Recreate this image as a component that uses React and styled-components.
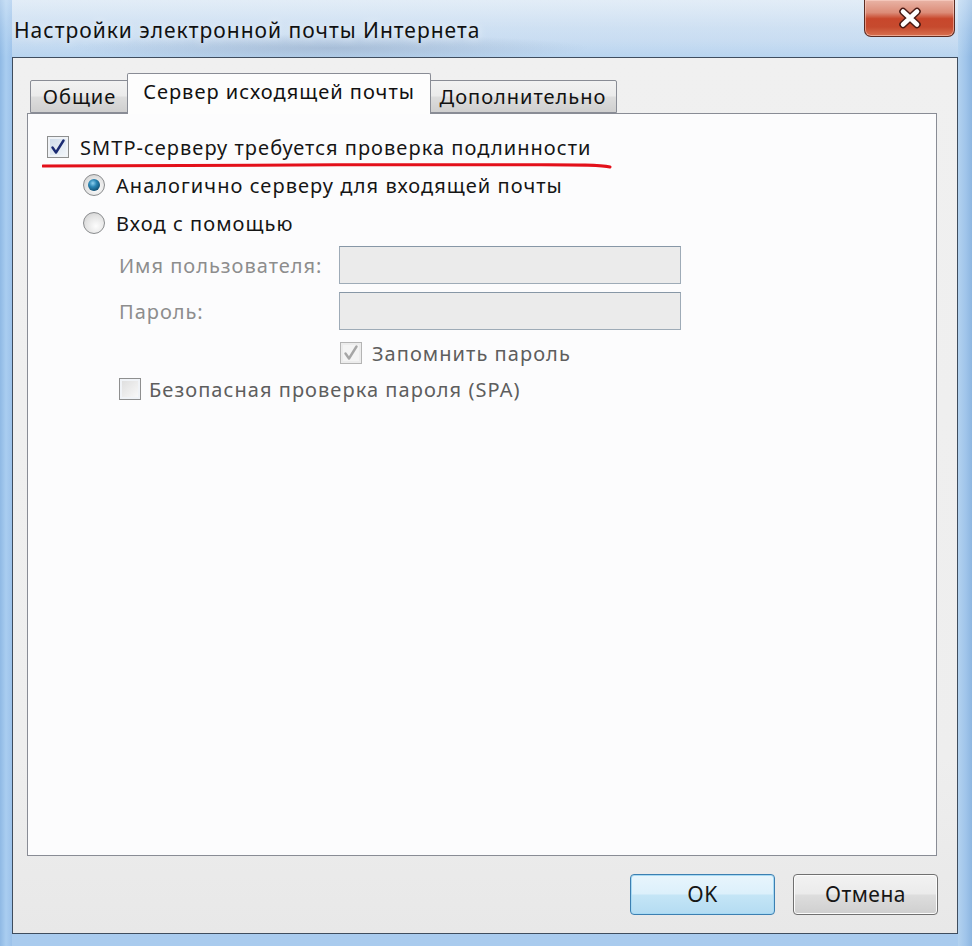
import React from 'react';
import styled, { createGlobalStyle } from 'styled-components';

const GlobalStyle = createGlobalStyle`
	html, body {
		margin: 0;
		padding: 0;
		background: #ffffff;
	}
	body {
		font-family: "Noto Sans", "Open Sans", sans-serif;
	}
`

function CheckMark({ color }) {
	return (
		<svg width="16" height="16" viewBox="0 0 16 16">
			<path d="M2.5 8.5 L6 13.5 L13.5 1.5" fill="none" stroke={color} strokeWidth="2.4" strokeLinecap="round" strokeLinejoin="round" />
		</svg>
	)
}

function CloseGlyph() {
	return (
		<svg width="30" height="22" viewBox="0 0 30 22">
			<path d="M8 4.5 L22 17.5 M22 4.5 L8 17.5" stroke="#4a1a14" strokeWidth="7.5" strokeLinecap="round" />
			<path d="M8 4.5 L22 17.5 M22 4.5 L8 17.5" stroke="#ffffff" strokeWidth="4.5" strokeLinecap="round" />
		</svg>
	)
}

function RedUnderline() {
	return (
		<Underline width="570" height="8" viewBox="0 0 570 8">
			<path d="M1 5 C 120 4.5, 300 3.5, 450 3.8 C 520 4, 555 3, 568 6" fill="none" stroke="#e3101a" strokeWidth="3" strokeLinecap="round" />
		</Underline>
	)
}

function App() {
	return (
		<Window>
			<GlobalStyle />
			<TitleBar>
				<Title>Настройки электронной почты Интернета</Title>
				<CloseButton><CloseGlyph /></CloseButton>
			</TitleBar>
			<Client>
				<TabRow>
					<Tab width={99}>Общие</Tab>
					<Tab width={304} active>Сервер исходящей почты</Tab>
					<Tab width={188}>Дополнительно</Tab>
				</TabRow>
				<Panel>
					<Row top={0} indent={0}>
						<Box checked>
							<CheckMark color="#1a2a72" />
						</Box>
						<Label gap={11}>SMTP-серверу требуется проверка подлинности</Label>
						<RedUnderline />
					</Row>
					<Row top={14} indent={36}>
						<Radio selected />
						<Label gap={11}>Аналогично серверу для входящей почты</Label>
					</Row>
					<Row top={14} indent={36}>
						<Radio />
						<Label gap={11}>Вход с помощью</Label>
					</Row>
					<FieldRow top={11}>
						<FieldLabel>Имя пользователя:</FieldLabel>
						<Field disabled />
					</FieldRow>
					<FieldRow top={8}>
						<FieldLabel>Пароль:</FieldLabel>
						<Field disabled type="password" />
					</FieldRow>
					<Row top={11} indent={293}>
						<Box disabled>
							<CheckMark color="#a6a6a6" />
						</Box>
						<Label gap={10} muted>Запомнить пароль</Label>
					</Row>
					<Row top={12} indent={72}>
						<Box />
						<Label gap={8} muted>Безопасная проверка пароля (SPA)</Label>
					</Row>
				</Panel>
				<Footer>
					<Button primary>OK</Button>
					<Button>Отмена</Button>
				</Footer>
			</Client>
		</Window>
	);
}

const Window = styled.div`
	width: 972px;
	height: 946px;
	display: flex;
	flex-direction: column;
	box-sizing: border-box;
	overflow: hidden;
	background:
		linear-gradient(90deg, #8fb9e4 0px, #a9cdf0 6px, #9cc2ea 12px, transparent 12px, transparent 958px, #b3d2ef 958px, #9fc4ea 966px, #8db6e0 972px),
		linear-gradient(180deg, #d3e3f3 0px, #c6dbf1 40px, #b6d3ef 60px, #a9cbee 100%);
`

const TitleBar = styled.div`
	height: 57px;
	flex: none;
	display: flex;
	align-items: flex-start;
	justify-content: space-between;
	padding: 0 17px 0 14px;
	background:
		radial-gradient(ellipse 260px 14px at 330px 48px, rgba(120,140,170,0.35), rgba(120,140,170,0)),
		linear-gradient(180deg, rgba(255,255,255,0.35) 0%, rgba(225,236,247,0.2) 50%, rgba(190,213,238,0) 100%);
`

const Title = styled.div`
	margin-top: 16px;
	font-size: 21px;
	color: #111111;
	letter-spacing: 1px;
	text-shadow: 0 0 10px rgba(255,255,255,0.9);
`

const CloseButton = styled.div`
	width: 91px;
	height: 37px;
	box-sizing: border-box;
	display: flex;
	align-items: center;
	justify-content: center;
	border: 1px solid #5b2b22;
	border-top: none;
	border-radius: 0 0 7px 7px;
	background: linear-gradient(180deg, #e9b4a6 0%, #dc8c78 35%, #c8472c 52%, #c64a2e 75%, #d8704f 100%);
	box-shadow: inset 0 0 0 1px rgba(255,220,210,0.5);
`

const Client = styled.div`
	flex: 1;
	display: flex;
	flex-direction: column;
	margin: 0 14px 12px 12px;
	padding: 15px 20px 0 14px;
	border: 1px solid #3f4d5e;
	background: linear-gradient(180deg, #f0f0f0 0%, #eeeeee 80%, #e8e8e8 100%);
`

const TabRow = styled.div`
	height: 40px;
	flex: none;
	display: flex;
	align-items: flex-end;
	padding-left: 3px;
	position: relative;
	z-index: 1;
`

const Tab = styled.div`
	width: ${p => p.width}px;
	box-sizing: border-box;
	height: ${p => p.active ? 41 : 33}px;
	margin: ${p => p.active ? '0 -2px -1px' : '0'};
	position: relative;
	z-index: ${p => p.active ? 2 : 1};
	display: flex;
	align-items: center;
	justify-content: center;
	padding-bottom: ${p => p.active ? 6 : 0}px;
	font-size: 20px;
	letter-spacing: 1px;
	color: #111111;
	border: 1px solid #898c95;
	border-bottom: ${p => p.active ? 'none' : '1px solid #898c95'};
	border-radius: 2px 2px 0 0;
	background: ${p => p.active
		? '#fdfdfd'
		: 'linear-gradient(180deg, #f2f2f2 0%, #ebebeb 48%, #dddddd 52%, #cfcfcf 100%)'};
`

const Panel = styled.div`
	flex: 1;
	display: flex;
	flex-direction: column;
	padding: 21px 19px 0 19px;
	border: 1px solid #898c95;
	background: #fcfcfd;
`

const Row = styled.div`
	position: relative;
	display: flex;
	align-items: center;
	height: 24px;
	margin-top: ${p => p.top}px;
	padding-left: ${p => p.indent}px;
`

const Label = styled.span`
	margin-left: ${p => p.gap}px;
	font-size: 20px;
	letter-spacing: 1.05px;
	white-space: nowrap;
	color: ${p => p.muted ? '#5e5e5e' : '#151515'};
`

const Underline = styled.svg`
	position: absolute;
	left: -5px;
	top: 26px;
`

const Box = styled.div`
	width: 22px;
	height: 22px;
	box-sizing: border-box;
	flex: none;
	display: flex;
	align-items: center;
	justify-content: center;
	border: 1px solid ${p => p.disabled ? '#b4b4b4' : '#8e8f8f'};
	background: ${p => p.disabled
		? '#f4f4f4'
		: p.checked
			? 'linear-gradient(135deg, #cbd9e8 0%, #f4f7fb 100%)'
			: 'linear-gradient(135deg, #dcdcdc 0%, #fbfbfb 100%)'};
	box-shadow: inset 0 0 0 2px ${p => p.disabled ? '#ececec' : '#f0f3f7'};
`

const Radio = styled.div`
	width: 22px;
	height: 22px;
	box-sizing: border-box;
	flex: none;
	border-radius: 50%;
	border: 1px solid #8a8c8e;
	position: relative;
	background: radial-gradient(circle at 60% 65%, #fdfdfd 0%, #e4e4e4 55%, #c9c9c9 100%);

	&::after {
		content: '';
		display: ${p => p.selected ? 'block' : 'none'};
		position: absolute;
		left: 4px;
		top: 4px;
		width: 12px;
		height: 12px;
		border-radius: 50%;
		background: radial-gradient(circle at 40% 35%, #8ed0ef 0%, #2a86b5 35%, #0f4a6d 80%, #0b3550 100%);
	}
`

const FieldRow = styled.div`
	display: flex;
	align-items: center;
	margin-top: ${p => p.top}px;
	padding-left: 72px;
`

const FieldLabel = styled.span`
	width: 220px;
	flex: none;
	font-size: 20px;
	letter-spacing: 1px;
	color: #8d8d8d;
`

const Field = styled.input`
	width: 342px;
	height: 38px;
	box-sizing: border-box;
	margin: 0;
	border: 1px solid #9eabb7;
	border-top-color: #8797a6;
	background: #ebebeb;
	outline: none;
`

const Footer = styled.div`
	height: 77px;
	flex: none;
	display: flex;
	align-items: center;
	justify-content: flex-end;
	gap: 18px;
	padding-bottom: 1px;
	box-sizing: border-box;
	margin-right: -1px;
`

const Button = styled.button`
	width: 145px;
	height: 41px;
	box-sizing: border-box;
	font-family: "Noto Sans", "Open Sans", sans-serif;
	font-size: 21px;
	letter-spacing: 0.5px;
	color: #161616;
	border-radius: 4px;
	border: 1px solid ${p => p.primary ? '#3c7fb1' : '#707070'};
	background: ${p => p.primary
		? 'linear-gradient(180deg, #e8f5fc 0%, #dcf0fb 48%, #c4e5f6 52%, #b4dcf2 100%)'
		: 'linear-gradient(180deg, #f2f2f2 0%, #ebebeb 48%, #dddddd 52%, #cfcfcf 100%)'};
	box-shadow: inset 0 0 0 1px ${p => p.primary ? '#a7daf4' : '#fcfcfc'};
	padding: 0;
`

export default App;
